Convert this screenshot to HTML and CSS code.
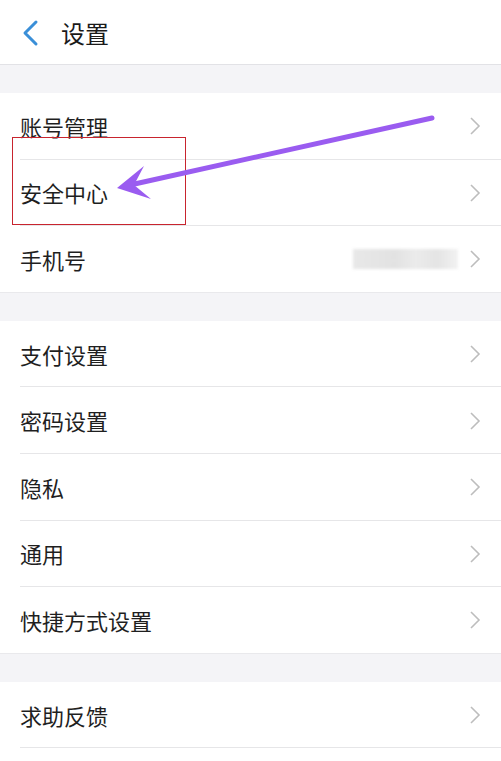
FILE: index.html
```html
<!DOCTYPE html>
<html lang="zh">
<head>
<meta charset="utf-8">
<title>设置</title>
<link rel="stylesheet" href="styles.css">
</head>
<body>
<div class="page">
  <header class="topbar">
    <svg class="back" width="20" height="28" viewBox="0 0 20 28"><path d="M15 3 L4 14 L15 25" fill="none" stroke="#3a8fd8" stroke-width="3" stroke-linecap="round" stroke-linejoin="round"/></svg>
    <h1 class="title">设置</h1>
  </header>
  <div class="gap"></div>
  <section class="group">
    <div class="row"><span class="label">账号管理</span><svg class="chev" width="12" height="20" viewBox="0 0 12 20"><path d="M2 2 L10 10 L2 18" fill="none" stroke="#bdbdbd" stroke-width="1.6"/></svg></div>
    <div class="row"><span class="label">安全中心</span><svg class="chev" width="12" height="20" viewBox="0 0 12 20"><path d="M2 2 L10 10 L2 18" fill="none" stroke="#bdbdbd" stroke-width="1.6"/></svg></div>
    <div class="row last"><span class="label">手机号</span><span class="masked"></span><svg class="chev" width="12" height="20" viewBox="0 0 12 20"><path d="M2 2 L10 10 L2 18" fill="none" stroke="#bdbdbd" stroke-width="1.6"/></svg></div>
  </section>
  <div class="gap"></div>
  <section class="group">
    <div class="row"><span class="label">支付设置</span><svg class="chev" width="12" height="20" viewBox="0 0 12 20"><path d="M2 2 L10 10 L2 18" fill="none" stroke="#bdbdbd" stroke-width="1.6"/></svg></div>
    <div class="row"><span class="label">密码设置</span><svg class="chev" width="12" height="20" viewBox="0 0 12 20"><path d="M2 2 L10 10 L2 18" fill="none" stroke="#bdbdbd" stroke-width="1.6"/></svg></div>
    <div class="row"><span class="label">隐私</span><svg class="chev" width="12" height="20" viewBox="0 0 12 20"><path d="M2 2 L10 10 L2 18" fill="none" stroke="#bdbdbd" stroke-width="1.6"/></svg></div>
    <div class="row"><span class="label">通用</span><svg class="chev" width="12" height="20" viewBox="0 0 12 20"><path d="M2 2 L10 10 L2 18" fill="none" stroke="#bdbdbd" stroke-width="1.6"/></svg></div>
    <div class="row last"><span class="label">快捷方式设置</span><svg class="chev" width="12" height="20" viewBox="0 0 12 20"><path d="M2 2 L10 10 L2 18" fill="none" stroke="#bdbdbd" stroke-width="1.6"/></svg></div>
  </section>
  <div class="gap"></div>
  <section class="group">
    <div class="row"><span class="label">求助反馈</span><svg class="chev" width="12" height="20" viewBox="0 0 12 20"><path d="M2 2 L10 10 L2 18" fill="none" stroke="#bdbdbd" stroke-width="1.6"/></svg></div>
  </section>

  <div class="highlight"></div>
  <svg class="arrow" width="501" height="761" viewBox="0 0 501 761">
    <line x1="432" y1="118" x2="130" y2="185" stroke="#9a5cf0" stroke-width="5" stroke-linecap="round"/>
    <polygon points="117,188 144,166 134,185 151,199" fill="#9a5cf0"/>
  </svg>
</div>
</body>
</html>
```
FILE: styles.css
```css
html, body {
  margin: 0;
  padding: 0;
  background: #ffffff;
}
.page {
  position: relative;
  width: 501px;
  height: 761px;
  overflow: hidden;
  font-family: "Noto Sans CJK SC", "Noto Sans", sans-serif;
  color: #1f1f1f;
}
.topbar {
  height: 64px;
  display: flex;
  align-items: center;
  border-bottom: 1px solid #e2e2e6;
}
.back {
  margin-left: 21px;
  margin-top: 2px;
}
.title {
  margin: 0 0 0 20px;
  font-size: 24px;
  font-weight: 400;
  color: #1a1a1a;
}
.gap {
  height: 28px;
  background: #f4f4f7;
}
.group {
  background: #ffffff;
}
.row {
  height: 65.6px;
  margin-left: 20px;
  padding-right: 20px;
  display: flex;
  align-items: center;
  border-bottom: 1px solid #e6e6e8;
}
.row.last {
  border-bottom: 1px solid #e9e9ec;
  margin-left: 0;
  padding-left: 20px;
}
.label {
  flex: 1;
  font-size: 22px;
}
.chev {
  display: block;
  margin-top: 1px;
}
.masked {
  width: 105px;
  height: 20px;
  margin-right: 11px;
  background: linear-gradient(90deg, #e8e8e8 0%, #e2e2e2 40%, #ebebeb 60%, #e4e4e4 80%, #f2f2f2 100%);
  filter: blur(1.5px);
}
.highlight {
  position: absolute;
  left: 12px;
  top: 137px;
  width: 172px;
  height: 86px;
  border: 1px solid #c8242e;
}
.arrow {
  position: absolute;
  left: 0;
  top: 0;
}
```
